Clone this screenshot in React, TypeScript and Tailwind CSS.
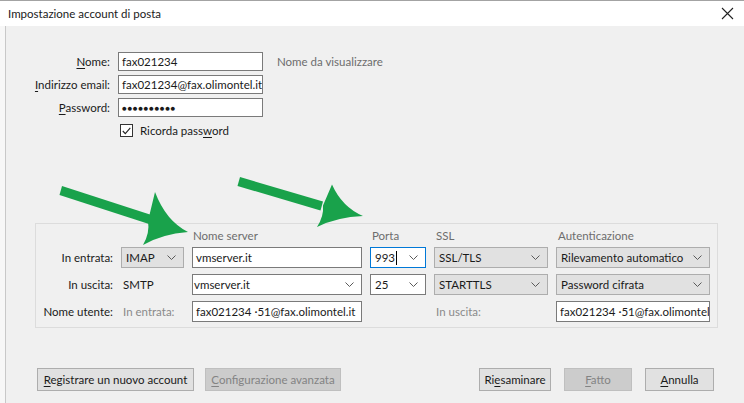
import React from "react";

const Chevron = () => (
  <svg width="9" height="5" viewBox="0 0 9 5" className="shrink-0">
    <path d="M0.5 0.5 L4.5 4.5 L8.5 0.5" fill="none" stroke="#5a5a5a" strokeWidth="1" />
  </svg>
);

function U({ children }: { children: React.ReactNode }) {
  return <span className="underline underline-offset-2">{children}</span>;
}

function Select({ value, white, focused, cursor }: { value: string; white?: boolean; focused?: boolean; cursor?: boolean }) {
  const border = focused ? "border-[#0078d7]" : white ? "border-[#7a7a7a]" : "border-[#adadad]";
  const bg = white ? "bg-white" : "bg-[#e1e1e1]";
  return (
    <div className={`h-[21px] flex items-center justify-between border ${border} ${bg} pl-[4px] pr-[7px]`}>
      <span className="flex items-center whitespace-nowrap">
        {value}
        {cursor && <span className="inline-block w-px h-[14px] bg-black ml-px" />}
      </span>
      <Chevron />
    </div>
  );
}

function Input({ value, h = "h-[21px]" }: { value: string; h?: string }) {
  return (
    <div className={`${h} flex items-center border border-[#7a7a7a] bg-white px-[3px] overflow-hidden whitespace-nowrap`}>
      {value}
    </div>
  );
}

function Button({ children, disabled, w }: { children: React.ReactNode; disabled?: boolean; w: string }) {
  return (
    <div
      className={`${w} h-[23px] flex items-center justify-center border ${
        disabled ? "border-[#bfbfbf] bg-[#cccccc] text-[#838383]" : "border-[#adadad] bg-[#e1e1e1] text-[#1a1a1a]"
      }`}
    >
      {children}
    </div>
  );
}

export default function App() {
  const cols = "grid grid-cols-[77px_63px_170px_56px_114px_154px] gap-x-2 items-center";
  return (
    <div
      className="relative w-[744px] h-[403px] overflow-hidden bg-[#f7f7f7] text-[11.5px] text-[#1a1a1a] flex flex-col"
      style={{ fontFamily: "Lato, 'Noto Sans', sans-serif" }}
    >
      <div className="h-px bg-[#a3a3a3]" />
      <div className="h-[25px] bg-white flex items-center justify-between pl-2 pr-[10px]">
        <span>Impostazione account di posta</span>
        <svg width="13" height="13" viewBox="0 0 13 13">
          <path d="M1 1 L12 12 M12 1 L1 12" stroke="#222" strokeWidth="1.1" />
        </svg>
      </div>

      <div className="flex-1 ml-[5px] border-l border-[#c8c8c8] bg-[#f0f0f0] flex flex-col">
        {/* account fields */}
        <div className="mt-[26px] grid grid-cols-[104px_145px_1fr] gap-x-2 gap-y-[4px] items-center">
          <span className="text-right">
            <U>N</U>ome:
          </span>
          <Input value="fax021234" h="h-[19px]" />
          <span className="ml-[6px] text-[#6d6d6d]">Nome da visualizzare</span>

          <span className="text-right">
            <U>I</U>ndirizzo email:
          </span>
          <Input value="fax021234@fax.olimontel.it" h="h-[19px]" />
          <span />

          <span className="text-right">
            <U>P</U>assword:
          </span>
          <div className="h-[19px] flex items-center border border-[#7a7a7a] bg-white px-[3px] text-[8px] tracking-[0.6px]">
            ●●●●●●●●●●
          </div>
          <span />
        </div>

        <div className="mt-[7px] ml-[114px] flex items-center gap-[7px] h-[13px]">
          <div className="w-[13px] h-[13px] border border-[#333] bg-white flex items-center justify-center">
            <svg width="9" height="8" viewBox="0 0 9 8">
              <path d="M0.8 4 L3.3 6.6 L8.3 0.8" fill="none" stroke="#222" strokeWidth="1.1" />
            </svg>
          </div>
          <span>
            Ricorda pass<U>w</U>ord
          </span>
        </div>

        {/* server settings */}
        <div className="mt-[86px] ml-[29px] w-[683px] border border-[#dcdcdc] pt-[3px] pb-[5px] pr-[7px] flex flex-col">
          <div className={`${cols} h-[16px] text-[#6d6d6d]`}>
            <span />
            <span />
            <span className="pl-px">Nome server</span>
            <span className="pl-[2px]">Porta</span>
            <span className="pl-[2px]">SSL</span>
            <span className="pl-[2px]">Autenticazione</span>
          </div>

          <div className={`${cols} mt-[4px]`}>
            <span className="text-right">In entrata:</span>
            <Select value="IMAP" />
            <Input value="vmserver.it" />
            <Select value="993" white focused cursor />
            <Select value="SSL/TLS" />
            <Select value="Rilevamento automatico" />
          </div>

          <div className={`${cols} mt-[6px]`}>
            <span className="text-right">In uscita:</span>
            <span className="pl-[2px]">SMTP</span>
            <div className="h-[21px] flex items-center justify-between border border-[#7a7a7a] bg-white pl-px pr-[7px]">
              <span>vmserver.it</span>
              <Chevron />
            </div>
            <Select value="25" white />
            <Select value="STARTTLS" />
            <Select value="Password cifrata" />
          </div>

          <div className={`${cols} mt-[6px]`}>
            <span className="text-right whitespace-nowrap">Nome utente:</span>
            <span className="pl-[2px] text-[#8a8a8a] whitespace-nowrap">In entrata:</span>
            <Input value="fax021234 ·51@fax.olimontel.it" />
            <span />
            <span className="pl-[2px] text-[#8a8a8a]">In uscita:</span>
            <Input value="fax021234 ·51@fax.olimontel.it" />
          </div>
        </div>

        {/* buttons */}
        <div className="mt-[40px] ml-[31px] w-[677px] flex justify-between">
          <div className="flex gap-[11px]">
            <Button w="w-[157px]">
              <span>
                <U>R</U>egistrare un nuovo account
              </span>
            </Button>
            <Button w="w-[136px]" disabled>
              <span>
                <U>C</U>onfigurazione avanzata
              </span>
            </Button>
          </div>
          <div className="flex gap-[13px]">
            <Button w="w-[72px]">
              <span>
                Ri<U>e</U>saminare
              </span>
            </Button>
            <Button w="w-[68px]" disabled>
              <span>
                <U>F</U>atto
              </span>
            </Button>
            <Button w="w-[69px]">
              <span>
                <U>A</U>nnulla
              </span>
            </Button>
          </div>
        </div>
      </div>

      {/* green annotation arrows */}
      <svg className="absolute top-0 left-0 pointer-events-none" width="744" height="403" viewBox="0 0 744 403">
        <g fill="#19a24b" stroke="none">
          <path d="M62 186 L153 215.5 L150.5 224.5 L59.5 195 Z" />
          <path d="M155 192 Q166 221 188 232 Q162 234 143 245 Q150 233 148 221 Z" />
          <path d="M240 177 L323 201.5 L320.5 210.5 L237.5 186 Z" />
          <path d="M332 184.5 Q342 207 363 216 Q337 217 317 227 Q324 216 323 205.5 Z" />
        </g>
      </svg>
    </div>
  );
}
